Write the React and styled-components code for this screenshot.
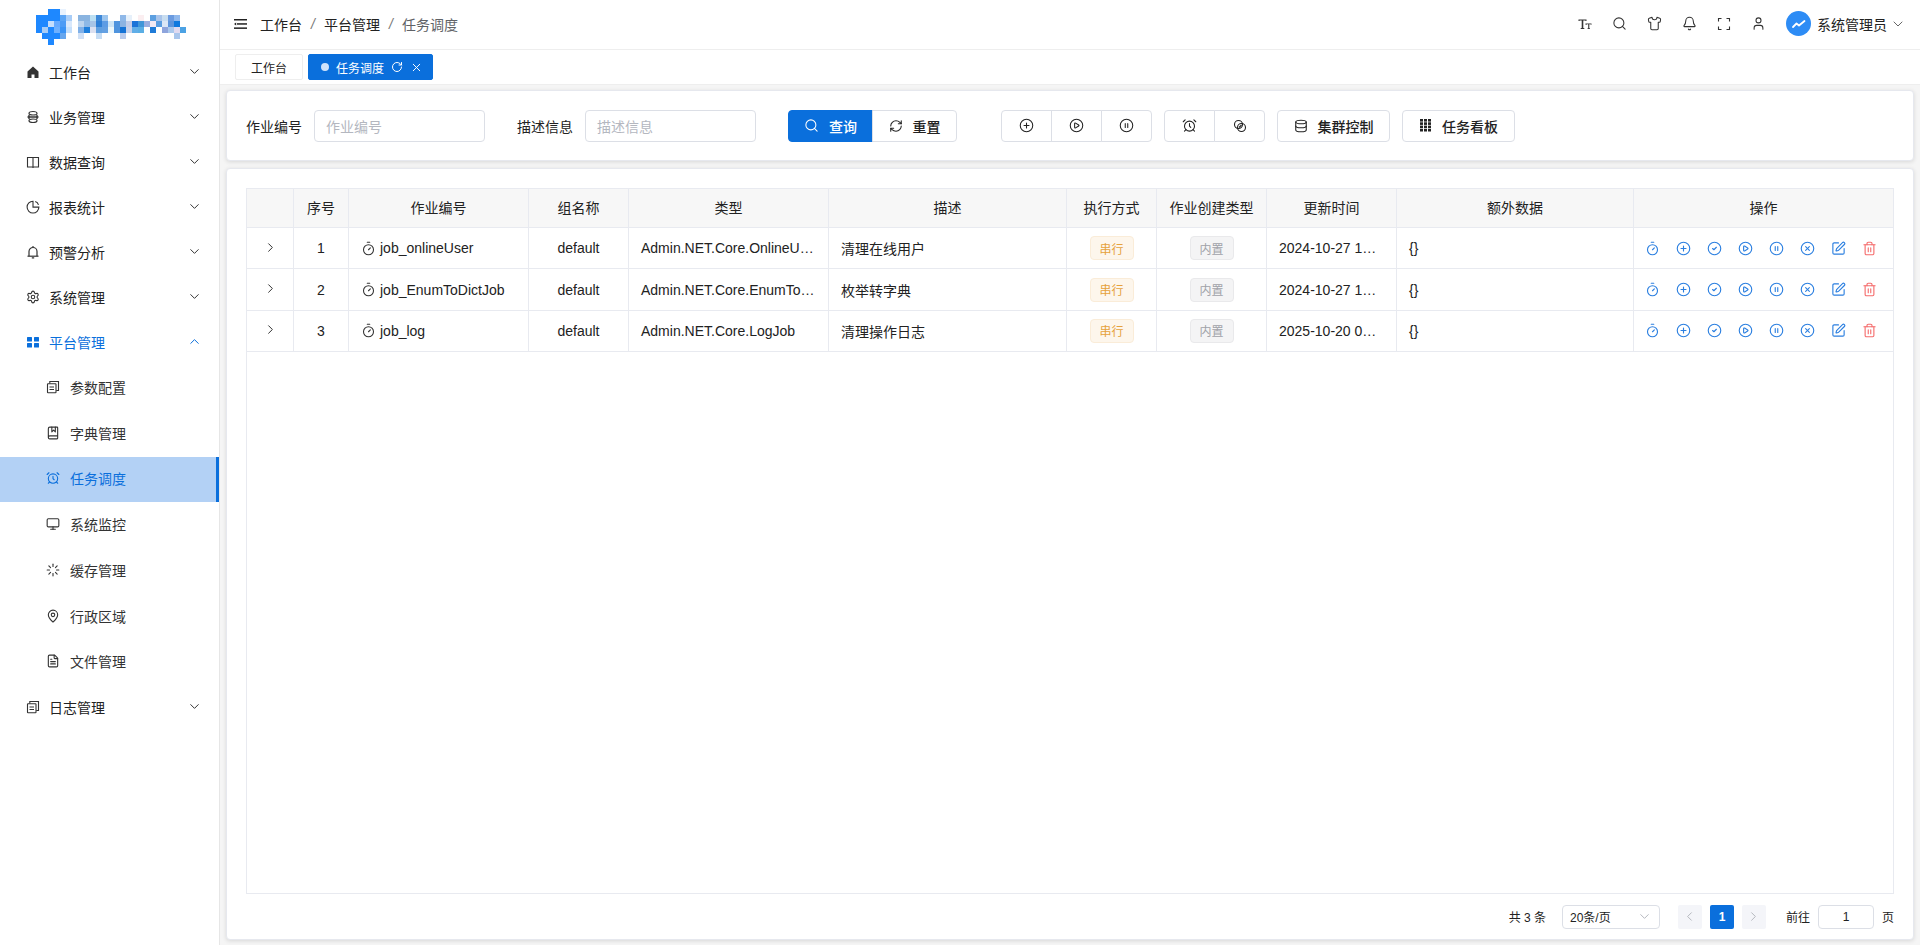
import React from "react";
import styled, { createGlobalStyle } from "styled-components";
import {
  AlarmClock,
  ChevronDown,
  ChevronLeft,
  ChevronRight,
  ChevronUp,
  CircleCheck,
  CirclePause,
  CirclePlay,
  CirclePlus,
  CircleX,
  Bell,
  Database,
  Loader,
  MapPin,
  Monitor,
  RefreshCw,
  RotateCw,
  Search,
  Shirt,
  SquarePen,
  Timer,
  Trash2,
  User,
  X,
  FileText,
  BookMarked,
  Settings,
} from "lucide-react";

const GlobalStyle = createGlobalStyle`
  html, body { margin: 0; height: 100%; }
  body {
    font-family: "Liberation Sans", "Noto Sans CJK SC", sans-serif;
    font-size: 14px;
    color: #222;
    background: #f5f5f5;
    overflow: hidden;
  }
  #root { height: 100%; }
  * { box-sizing: border-box; }
`;

const logoRows = [
  [[2, "#1e88ff"], [3, "#1e88ff"], [4, "#e8f2fe"]],
  [[0, "#1e88ff"], [1, "#1e88ff"], [2, "#1e88ff"], [3, "#1e88ff"], [4, "#5aa4f5"], [5, "#a9cdf7"], [7, "#8ab4e0"], [8, "#8ab4e0"], [9, "#bcdff2"], [10, "#3e88d8"], [11, "#9cc5ee"], [14, "#8fb8e8"], [15, "#e6f0fa"], [17, "#fbeef0"], [19, "#5c9fe0"], [20, "#a9c4ea"], [21, "#c8ddf0"], [22, "#6b9be0"], [23, "#90b8ec"]],
  [[0, "#1e88ff"], [1, "#1e88ff"], [2, "#c5defc"], [3, "#66aaff"], [4, "#4c9bf5"], [5, "#d9e8fb"], [7, "#bcd4ee"], [8, "#8db8e6"], [9, "#a7c4e6"], [10, "#2e7fd6"], [11, "#5d9ce4"], [12, "#cfe6f6"], [13, "#4f94de"], [14, "#8cb3e2"], [15, "#c3cde8"], [16, "#1a73d8"], [17, "#3f96d8"], [18, "#9aaee0"], [19, "#f2e9f4"], [20, "#5a9ce0"], [21, "#dbe6f6"], [22, "#5d94dc"], [23, "#0f78de"]],
  [[0, "#1e88ff"], [1, "#a8cdf7"], [2, "#1e88ff"], [3, "#6db0ff"], [4, "#3a93f5"], [5, "#c5dffb"], [7, "#7fb0e8"], [8, "#1f7fdc"], [9, "#dbe0f0"], [10, "#5f9fe0"], [11, "#64a0e2"], [12, "#eef8fb"], [13, "#4f94de"], [14, "#1573d6"], [15, "#c9d2ea"], [16, "#60aee8"], [17, "#5aaee4"], [19, "#1f7bd8"], [21, "#8ea4dc"], [22, "#a9c8ec"], [23, "#e0daf0"], [24, "#4ba2e4"]],
  [[1, "#1e88ff"], [2, "#1e88ff"], [3, "#1e88ff"], [4, "#66a6ee"], [7, "#cfe0f6"], [10, "#c5dcf4"], [14, "#b9cbec"], [23, "#a9c6ec"]],
  [[2, "#1e88ff"]],
];

const HomeIcon = () => (
  <svg width="14" height="14" viewBox="0 0 14 14" fill="currentColor">
    <path d="M7 1.500 1.500 6.500V13H5.500V9.500h3V13H12.500V6.500z" />
  </svg>
);
const BizIcon = () => (
  <svg width="14" height="14" viewBox="0 0 14 14" fill="none" stroke="currentColor" strokeWidth="1.200">
    <path d="M3 3.500a4 2 0 0 1 8 0c0 1-1.500 1.500-4 1.500S3 4.500 3 3.500z" />
    <path d="M3 10.500a4 2 0 0 0 8 0c0-1-1.500-1.500-4-1.500s-4 .5-4 1.500z" />
    <path d="M1.500 7h11M3 5v4M11 5v4" strokeWidth="1.400" />
  </svg>
);
const BookIcon = () => (
  <svg width="14" height="14" viewBox="0 0 14 14" fill="none" stroke="currentColor" strokeWidth="1.100">
    <path d="M7 2.500H1.500v9.500H7M7 2.500h5.500v9.500H7M7 2.500v10.500" />
  </svg>
);
const PieIcon = () => (
  <svg width="14" height="14" viewBox="0 0 14 14" fill="none" stroke="currentColor" strokeWidth="1.100">
    <path d="M7 1.200a5.900 5.900 0 1 0 5.900 5.900H7z" />
    <path d="M9.200 1.500a5 5 0 0 1 3.300 3.300" />
  </svg>
);
const AlertIcon = () => (
  <svg width="14" height="14" viewBox="0 0 14 14" fill="none" stroke="currentColor" strokeWidth="1.200">
    <path d="M3 11V6.500a4 4 0 0 1 8 0V11" />
    <path d="M1.500 11.200h11" />
    <path d="M7 1v1M5.800 12.800h2.400" />
  </svg>
);
const DocStack = () => (
  <svg width="14" height="14" viewBox="0 0 14 14" fill="none" stroke="currentColor" strokeWidth="1.100">
    <path d="M3.800 3.500V1.500H12.500V10.500H10.200" />
    <rect x="1.500" y="3.700" width="8.500" height="9" rx=".5" />
    <path d="M3.500 7h4.500M3.500 9.500h4.500" />
  </svg>
);
const GridFour = () => (
  <svg width="14" height="14" viewBox="0 0 14 14" fill="currentColor">
    <rect x="1" y="2" width="5" height="4.500" rx=".5" />
    <rect x="8" y="2" width="5" height="4.500" rx=".5" />
    <rect x="1" y="8" width="5" height="4.500" rx=".5" />
    <rect x="8" y="8" width="5" height="4.500" rx=".5" />
  </svg>
);
const MenuFold = () => (
  <svg width="13" height="12" viewBox="0 0 13 12" fill="currentColor">
    <rect x="0" y="1" width="13" height="1.500" />
    <rect x="3" y="5.200" width="10" height="1.500" />
    <rect x="0" y="9.400" width="13" height="1.500" />
    <path d="M0 6 2.200 4.400v3.200z" />
  </svg>
);
const FontSize = () => (
  <svg width="14" height="14" viewBox="0 0 14 14" fill="currentColor">
    <path d="M.5 2.500h8v1.600h-.9l-.3-.6H5.300V11h1v1H2.700v-1h1V3.500H1.700l-.3.600H.5z" />
    <path d="M7.500 6.500h6v1.200h-.7l-.2-.4h-1.300V11.200h.7v.8H9.500v-.8h.7V7.300H8.900l-.2.400h-1.200z" />
  </svg>
);
const Fullscreen = () => (
  <svg width="14" height="14" viewBox="0 0 14 14" fill="none" stroke="currentColor" strokeWidth="1.100">
    <path d="M1.500 4.500v-3h3M9.500 1.500h3v3M12.500 9.500v3h-3M4.500 12.500h-3v-3" />
  </svg>
);
const Pulse = () => (
  <svg width="16" height="16" viewBox="0 0 16 16" fill="none" stroke="#fff" strokeWidth="1.800" strokeLinecap="round" strokeLinejoin="round">
    <path d="M2 11l3.500-3.500 2.500 2L13.500 5" />
  </svg>
);
const DotsGrid = () => (
  <svg width="13" height="13" viewBox="0 0 13 13" fill="currentColor">
    {[0, 1, 2, 3].flatMap((r) =>
      [0, 1, 2].map((c) => <rect key={`${r}${c}`} x={1 + c * 4} y={r * 3.300} width="3" height="2.600" />)
    )}
  </svg>
);
const LinkCircle = () => (
  <svg width="14" height="14" viewBox="0 0 14 14" fill="none" stroke="currentColor" strokeWidth="1.100">
    <circle cx="5.500" cy="5.500" r="4" />
    <circle cx="8.500" cy="8.500" r="4" />
    <path d="M6 8.500 8.500 6" />
  </svg>
);

const menuIconProps = { size: 14, strokeWidth: 1.900 };

const sidebarMenu = [
  { label: "工作台", icon: <HomeIcon /> },
  { label: "业务管理", icon: <BizIcon /> },
  { label: "数据查询", icon: <BookIcon /> },
  { label: "报表统计", icon: <PieIcon /> },
  { label: "预警分析", icon: <AlertIcon /> },
  { label: "系统管理", icon: <Settings {...menuIconProps} /> },
  {
    label: "平台管理",
    icon: <GridFour />,
    open: true,
    children: [
      { label: "参数配置", icon: <DocStack /> },
      { label: "字典管理", icon: <BookMarked {...menuIconProps} /> },
      { label: "任务调度", icon: <AlarmClock {...menuIconProps} />, active: true },
      { label: "系统监控", icon: <Monitor {...menuIconProps} /> },
      { label: "缓存管理", icon: <Loader {...menuIconProps} /> },
      { label: "行政区域", icon: <MapPin {...menuIconProps} /> },
      { label: "文件管理", icon: <FileText {...menuIconProps} /> },
    ],
  },
  { label: "日志管理", icon: <DocStack /> },
];

const columns = [
  { title: "", width: 47 },
  { title: "序号", width: 55 },
  { title: "作业编号", width: 180 },
  { title: "组名称", width: 100 },
  { title: "类型", width: 200 },
  { title: "描述", width: 238 },
  { title: "执行方式", width: 90 },
  { title: "作业创建类型", width: 110 },
  { title: "更新时间", width: 130 },
  { title: "额外数据", width: 237 },
  { title: "操作", width: 260 },
];

const jobs = [
  { no: 1, id: "job_onlineUser", type: "Admin.NET.Core.OnlineUserJob", desc: "清理在线用户", time: "2024-10-27 12:00:00" },
  { no: 2, id: "job_EnumToDictJob", type: "Admin.NET.Core.EnumToDictJob", desc: "枚举转字典", time: "2024-10-27 12:00:00" },
  { no: 3, id: "job_log", type: "Admin.NET.Core.LogJob", desc: "清理操作日志", time: "2025-10-20 09:00:00" },
];

const Layout = styled.div`
  display: flex;
  height: 100%;
`;

const Sidebar = styled.aside`
  width: 220px;
  flex: none;
  background: #fff;
  border-right: 1px solid #e6e6e6;
  display: flex;
  flex-direction: column;
`;

const LogoBar = styled.div`
  height: 50px;
  flex: none;
  padding: 9px 0 0 36px;
  svg { display: block; }
`;

const MenuRow = styled.div`
  height: ${(p) => (p.$sub ? "45.75px" : "45px")};
  display: flex;
  align-items: center;
  padding: 0 17px 2px ${(p) => (p.$sub ? "46px" : "26px")};
  gap: ${(p) => (p.$sub ? "10px" : "9px")};
  color: ${(p) => (p.$active || p.$open ? "#0a6fdc" : p.$sub ? "#333" : "#222")};
  background: ${(p) => (p.$active ? "#b3d1f5" : "transparent")};
  border-right: ${(p) => (p.$active ? "3px solid #0a6fdc" : "none")};
`;

const MenuIcon = styled.span`
  width: 14px;
  height: 14px;
  display: flex;
  flex: none;
  color: ${(p) => (p.$active || p.$open ? "#0a6fdc" : "#333")};
`;

const MenuLabel = styled.span`
  flex: 1;
`;

const Main = styled.main`
  flex: 1;
  min-width: 0;
  display: flex;
  flex-direction: column;
`;

const TopBar = styled.header`
  height: 50px;
  flex: none;
  background: #fff;
  border-bottom: 1px solid #eee;
  display: flex;
  align-items: center;
  padding: 0 14px 2px 14px;
`;

const Crumbs = styled.nav`
  display: flex;
  align-items: center;
  margin-left: 13px;
  flex: 1;
`;

const Crumb = styled.span`
  color: ${(p) => (p.$last ? "#606266" : "#222")};
`;

const CrumbSep = styled.span`
  color: #777;
  width: 22px;
  text-align: center;
  font-style: italic;
`;

const HeaderTools = styled.div`
  display: flex;
  align-items: center;
  gap: 20px;
  color: #333;
  svg { display: block; }
`;

const UserBox = styled.div`
  display: flex;
  align-items: center;
  gap: 6px;
  color: #222;
`;

const UserCaret = styled(ChevronDown)`
  margin-left: -3px;
  color: #666;
`;

const Avatar = styled.span`
  width: 25px;
  height: 25px;
  border-radius: 50%;
  background: #2d8cf5;
  display: flex;
  align-items: center;
  justify-content: center;
`;

const TabBar = styled.div`
  height: 35px;
  flex: none;
  background: #fff;
  border-bottom: 1px solid #eee;
  display: flex;
  align-items: center;
  padding: 0 0 0 15px;
  gap: 5px;
`;

const Tab = styled.div`
  height: 26px;
  display: flex;
  align-items: center;
  justify-content: ${(p) => (p.$active ? "flex-start" : "center")};
  gap: 7px;
  font-size: 12px;
  border-radius: 2px;
  padding: ${(p) => (p.$active ? "0 0 0 12px" : "0")};
  width: ${(p) => (p.$active ? "125px" : "68px")};
  color: ${(p) => (p.$active ? "#fff" : "#222")};
  background: ${(p) => (p.$active ? "#0a6fdc" : "#fff")};
  border: 1px solid ${(p) => (p.$active ? "#0a6fdc" : "#eee")};
  svg { flex: none; }
`;

const TabDot = styled.span`
  width: 8px;
  height: 8px;
  border-radius: 50%;
  background: #cfe3fb;
`;

const Content = styled.div`
  flex: 1;
  min-height: 0;
  display: flex;
  flex-direction: column;
  gap: 7px;
  padding: 5px 6px 5px;
`;

const Card = styled.section`
  background: #fff;
  border: 1px solid #e6e8ee;
  border-radius: 4px;
  box-shadow: 0 1px 4px rgba(0, 0, 0, 0.12);
`;

const FilterCard = styled(Card)`
  height: 71px;
  flex: none;
  display: flex;
  align-items: center;
  padding: 0 19px;
`;

const Field = styled.label`
  display: flex;
  align-items: center;
  gap: 12px;
  margin-right: 32px;
`;

const TextBox = styled.div`
  width: 171px;
  height: 32px;
  border: 1px solid #dcdfe6;
  border-radius: 4px;
  display: flex;
  align-items: center;
  padding: 0 11px;
  color: #b4b7bf;
`;

const Btn = styled.div`
  height: 32px;
  display: flex;
  align-items: center;
  justify-content: center;
  gap: 10px;
  font-weight: 500;
  font-size: 14px;
  width: ${(p) => p.$width || "50px"};
  color: ${(p) => (p.$primary ? "#fff" : "#222")};
  background: ${(p) => (p.$primary ? "#0a6fdc" : "#fff")};
  border: 1px solid ${(p) => (p.$primary ? "#0a6fdc" : "#dcdfe6")};
  border-radius: 4px;
  svg { display: block; }
`;

const BtnGroup = styled.div`
  display: flex;
  margin-right: ${(p) => p.$gap || "12px"};
  ${Btn} { border-radius: 0; margin-left: -1px; }
  ${Btn}:first-child { border-radius: 4px 0 0 4px; margin-left: 0; }
  ${Btn}:last-child { border-radius: 0 4px 4px 0; }
`;

const SoloBtn = styled(Btn)`
  margin-right: 12px;
`;

const TableCard = styled(Card)`
  flex: 1;
  min-height: 0;
  display: flex;
  flex-direction: column;
  padding: 19px 19px 0;
`;

const TableFrame = styled.div`
  flex: 1;
  min-height: 0;
  border: 1px solid #e8eaf0;
  border-top: none;
`;

const Grid = styled.table`
  border-collapse: collapse;
  table-layout: fixed;
  width: 1648px;
  margin-left: -1px;
`;

const Th = styled.th`
  height: 39px;
  background: #f7f7f7;
  border: 1px solid #e8eaf0;
  font-weight: 400;
  color: #222;
  padding: 0 0 3px;
  font-size: 14px;
`;

const Td = styled.td`
  height: 41.4px;
  border: 1px solid #e8eaf0;
  padding: 0 ${(p) => (p.$center ? "0" : "12px")};
  text-align: ${(p) => (p.$center ? "center" : "left")};
  white-space: nowrap;
  overflow: hidden;
  text-overflow: ellipsis;
  color: #222;
`;

const JobId = styled.span`
  display: flex;
  align-items: center;
  gap: 4px;
  color: #222;
  svg { flex: none; color: #333; }
`;

const Arrow = styled(ChevronRight)`
  color: #333;
  display: block;
  margin: -2px auto 0;
`;

const Tag = styled.span`
  display: inline-flex;
  align-items: center;
  justify-content: center;
  width: 44px;
  height: 24px;
  font-size: 12px;
  border-radius: 4px;
  color: ${(p) => (p.$gray ? "#a0a2a8" : "#e6a23c")};
  background: ${(p) => (p.$gray ? "#f4f4f5" : "#fdf6ec")};
  border: 1px solid ${(p) => (p.$gray ? "#e9e9eb" : "#faecd8")};
`;

const Actions = styled.div`
  display: flex;
  align-items: center;
  justify-content: center;
  gap: 16px;
  padding-right: 6px;
  color: #2b7fe0;
  svg { display: block; flex: none; }
`;

const Danger = styled(Trash2)`
  color: #f56c6c;
`;

const Pager = styled.footer`
  height: 45px;
  flex: none;
  display: flex;
  align-items: center;
  justify-content: flex-end;
  font-size: 12px;
  color: #222;
`;

const PageSelect = styled.div`
  width: 98px;
  height: 24px;
  margin: 0 18px 0 16px;
  border: 1px solid #dcdfe6;
  border-radius: 4px;
  display: flex;
  align-items: center;
  justify-content: space-between;
  padding: 0 7px;
  svg { color: #b0b3ba; }
`;

const PageBtn = styled.div`
  width: 24px;
  height: 24px;
  margin-right: 8px;
  border-radius: 2px;
  display: flex;
  align-items: center;
  justify-content: center;
  font-weight: 700;
  color: ${(p) => (p.$active ? "#fff" : "#b0b3ba")};
  background: ${(p) => (p.$active ? "#0a6fdc" : "#f4f5f9")};
`;

const JumpLabel = styled.span`
  margin-left: ${(p) => p.$left || "0"};
`;

const JumpBox = styled.div`
  width: 56px;
  height: 24px;
  margin: 0 8px;
  border: 1px solid #dcdfe6;
  border-radius: 4px;
  display: flex;
  align-items: center;
  justify-content: center;
`;

function Logo() {
  return (
    <svg width="156" height="36" viewBox="0 0 156 36">
      {logoRows.map((row, y) =>
        row.map(([x, color]) => (
          <rect key={`${x}-${y}`} x={x * 6} y={y * 6} width="6" height="6" fill={color} />
        ))
      )}
    </svg>
  );
}

function SideMenu() {
  return (
    <Sidebar>
      <LogoBar>
        <Logo />
      </LogoBar>
      {sidebarMenu.map((item) => (
        <React.Fragment key={item.label}>
          <MenuRow $open={item.open}>
            <MenuIcon $open={item.open}>{item.icon}</MenuIcon>
            <MenuLabel>{item.label}</MenuLabel>
            {item.open ? <ChevronUp size={15} strokeWidth={1.600} /> : <ChevronDown size={15} strokeWidth={1.600} color="#333" />}
          </MenuRow>
          {item.children &&
            item.children.map((sub) => (
              <MenuRow key={sub.label} $sub $active={sub.active}>
                <MenuIcon $active={sub.active}>{sub.icon}</MenuIcon>
                <MenuLabel>{sub.label}</MenuLabel>
              </MenuRow>
            ))}
        </React.Fragment>
      ))}
    </Sidebar>
  );
}

function Header() {
  return (
    <TopBar>
      <MenuFold />
      <Crumbs>
        <Crumb>工作台</Crumb>
        <CrumbSep>/</CrumbSep>
        <Crumb>平台管理</Crumb>
        <CrumbSep>/</CrumbSep>
        <Crumb $last>任务调度</Crumb>
      </Crumbs>
      <HeaderTools>
        <FontSize />
        <Search size={15} strokeWidth={1.700} />
        <Shirt size={15} strokeWidth={1.700} />
        <Bell size={15} strokeWidth={1.700} />
        <Fullscreen />
        <User size={15} strokeWidth={1.700} />
        <UserBox>
          <Avatar>
            <Pulse />
          </Avatar>
          系统管理员
          <UserCaret size={16} strokeWidth={1.500} />
        </UserBox>
      </HeaderTools>
    </TopBar>
  );
}

function Tabs() {
  return (
    <TabBar>
      <Tab>工作台</Tab>
      <Tab $active>
        <TabDot />
        任务调度
        <RotateCw size={12} strokeWidth={2} />
        <X size={13} strokeWidth={1.800} />
      </Tab>
    </TabBar>
  );
}

function Filter() {
  return (
    <FilterCard>
      <Field>
        作业编号
        <TextBox>作业编号</TextBox>
      </Field>
      <Field>
        描述信息
        <TextBox>描述信息</TextBox>
      </Field>
      <BtnGroup $gap="44px">
        <Btn $primary $width="85px">
          <Search size={15} strokeWidth={1.700} />
          查询
        </Btn>
        <Btn $width="85px">
          <RefreshCw size={14} strokeWidth={1.800} />
          重置
        </Btn>
      </BtnGroup>
      <BtnGroup>
        <Btn $width="51px">
          <CirclePlus size={15} strokeWidth={1.700} />
        </Btn>
        <Btn $width="51px">
          <CirclePlay size={15} strokeWidth={1.700} />
        </Btn>
        <Btn $width="51px">
          <CirclePause size={15} strokeWidth={1.700} />
        </Btn>
      </BtnGroup>
      <BtnGroup>
        <Btn $width="51px">
          <AlarmClock size={15} strokeWidth={1.700} />
        </Btn>
        <Btn $width="51px">
          <LinkCircle />
        </Btn>
      </BtnGroup>
      <SoloBtn $width="113px">
        <Database size={14} strokeWidth={1.800} />
        集群控制
      </SoloBtn>
      <SoloBtn $width="113px">
        <DotsGrid />
        任务看板
      </SoloBtn>
    </FilterCard>
  );
}

function JobTable() {
  return (
    <TableFrame>
      <Grid>
        <colgroup>
          {columns.map((c, i) => (
            <col key={i} style={{ width: c.width }} />
          ))}
        </colgroup>
        <thead>
          <tr>
            {columns.map((c, i) => (
              <Th key={i}>{c.title}</Th>
            ))}
          </tr>
        </thead>
        <tbody>
          {jobs.map((job) => (
            <tr key={job.no}>
              <Td $center>
                <Arrow size={15} strokeWidth={1.600} />
              </Td>
              <Td $center>{job.no}</Td>
              <Td>
                <JobId>
                  <Timer size={15} strokeWidth={1.700} />
                  {job.id}
                </JobId>
              </Td>
              <Td $center>default</Td>
              <Td>{job.type}</Td>
              <Td>{job.desc}</Td>
              <Td $center>
                <Tag>串行</Tag>
              </Td>
              <Td $center>
                <Tag $gray>内置</Tag>
              </Td>
              <Td>{job.time}</Td>
              <Td>{"{}"}</Td>
              <Td $center>
                <Actions>
                  <Timer size={15} strokeWidth={1.800} />
                  <CirclePlus size={15} strokeWidth={1.800} />
                  <CircleCheck size={15} strokeWidth={1.800} />
                  <CirclePlay size={15} strokeWidth={1.800} />
                  <CirclePause size={15} strokeWidth={1.800} />
                  <CircleX size={15} strokeWidth={1.800} />
                  <SquarePen size={15} strokeWidth={1.800} />
                  <Danger size={15} strokeWidth={1.800} />
                </Actions>
              </Td>
            </tr>
          ))}
        </tbody>
      </Grid>
    </TableFrame>
  );
}

function Pagination() {
  return (
    <Pager>
      <span>共 3 条</span>
      <PageSelect>
        20条/页
        <ChevronDown size={15} strokeWidth={1.500} />
      </PageSelect>
      <PageBtn>
        <ChevronLeft size={15} strokeWidth={1.500} />
      </PageBtn>
      <PageBtn $active>1</PageBtn>
      <PageBtn>
        <ChevronRight size={15} strokeWidth={1.500} />
      </PageBtn>
      <JumpLabel $left="12px">前往</JumpLabel>
      <JumpBox>1</JumpBox>
      <span>页</span>
    </Pager>
  );
}

export default function App() {
  return (
    <>
      <GlobalStyle />
      <Layout>
        <SideMenu />
        <Main>
          <Header />
          <Tabs />
          <Content>
            <Filter />
            <TableCard>
              <JobTable />
              <Pagination />
            </TableCard>
          </Content>
        </Main>
      </Layout>
    </>
  );
}
